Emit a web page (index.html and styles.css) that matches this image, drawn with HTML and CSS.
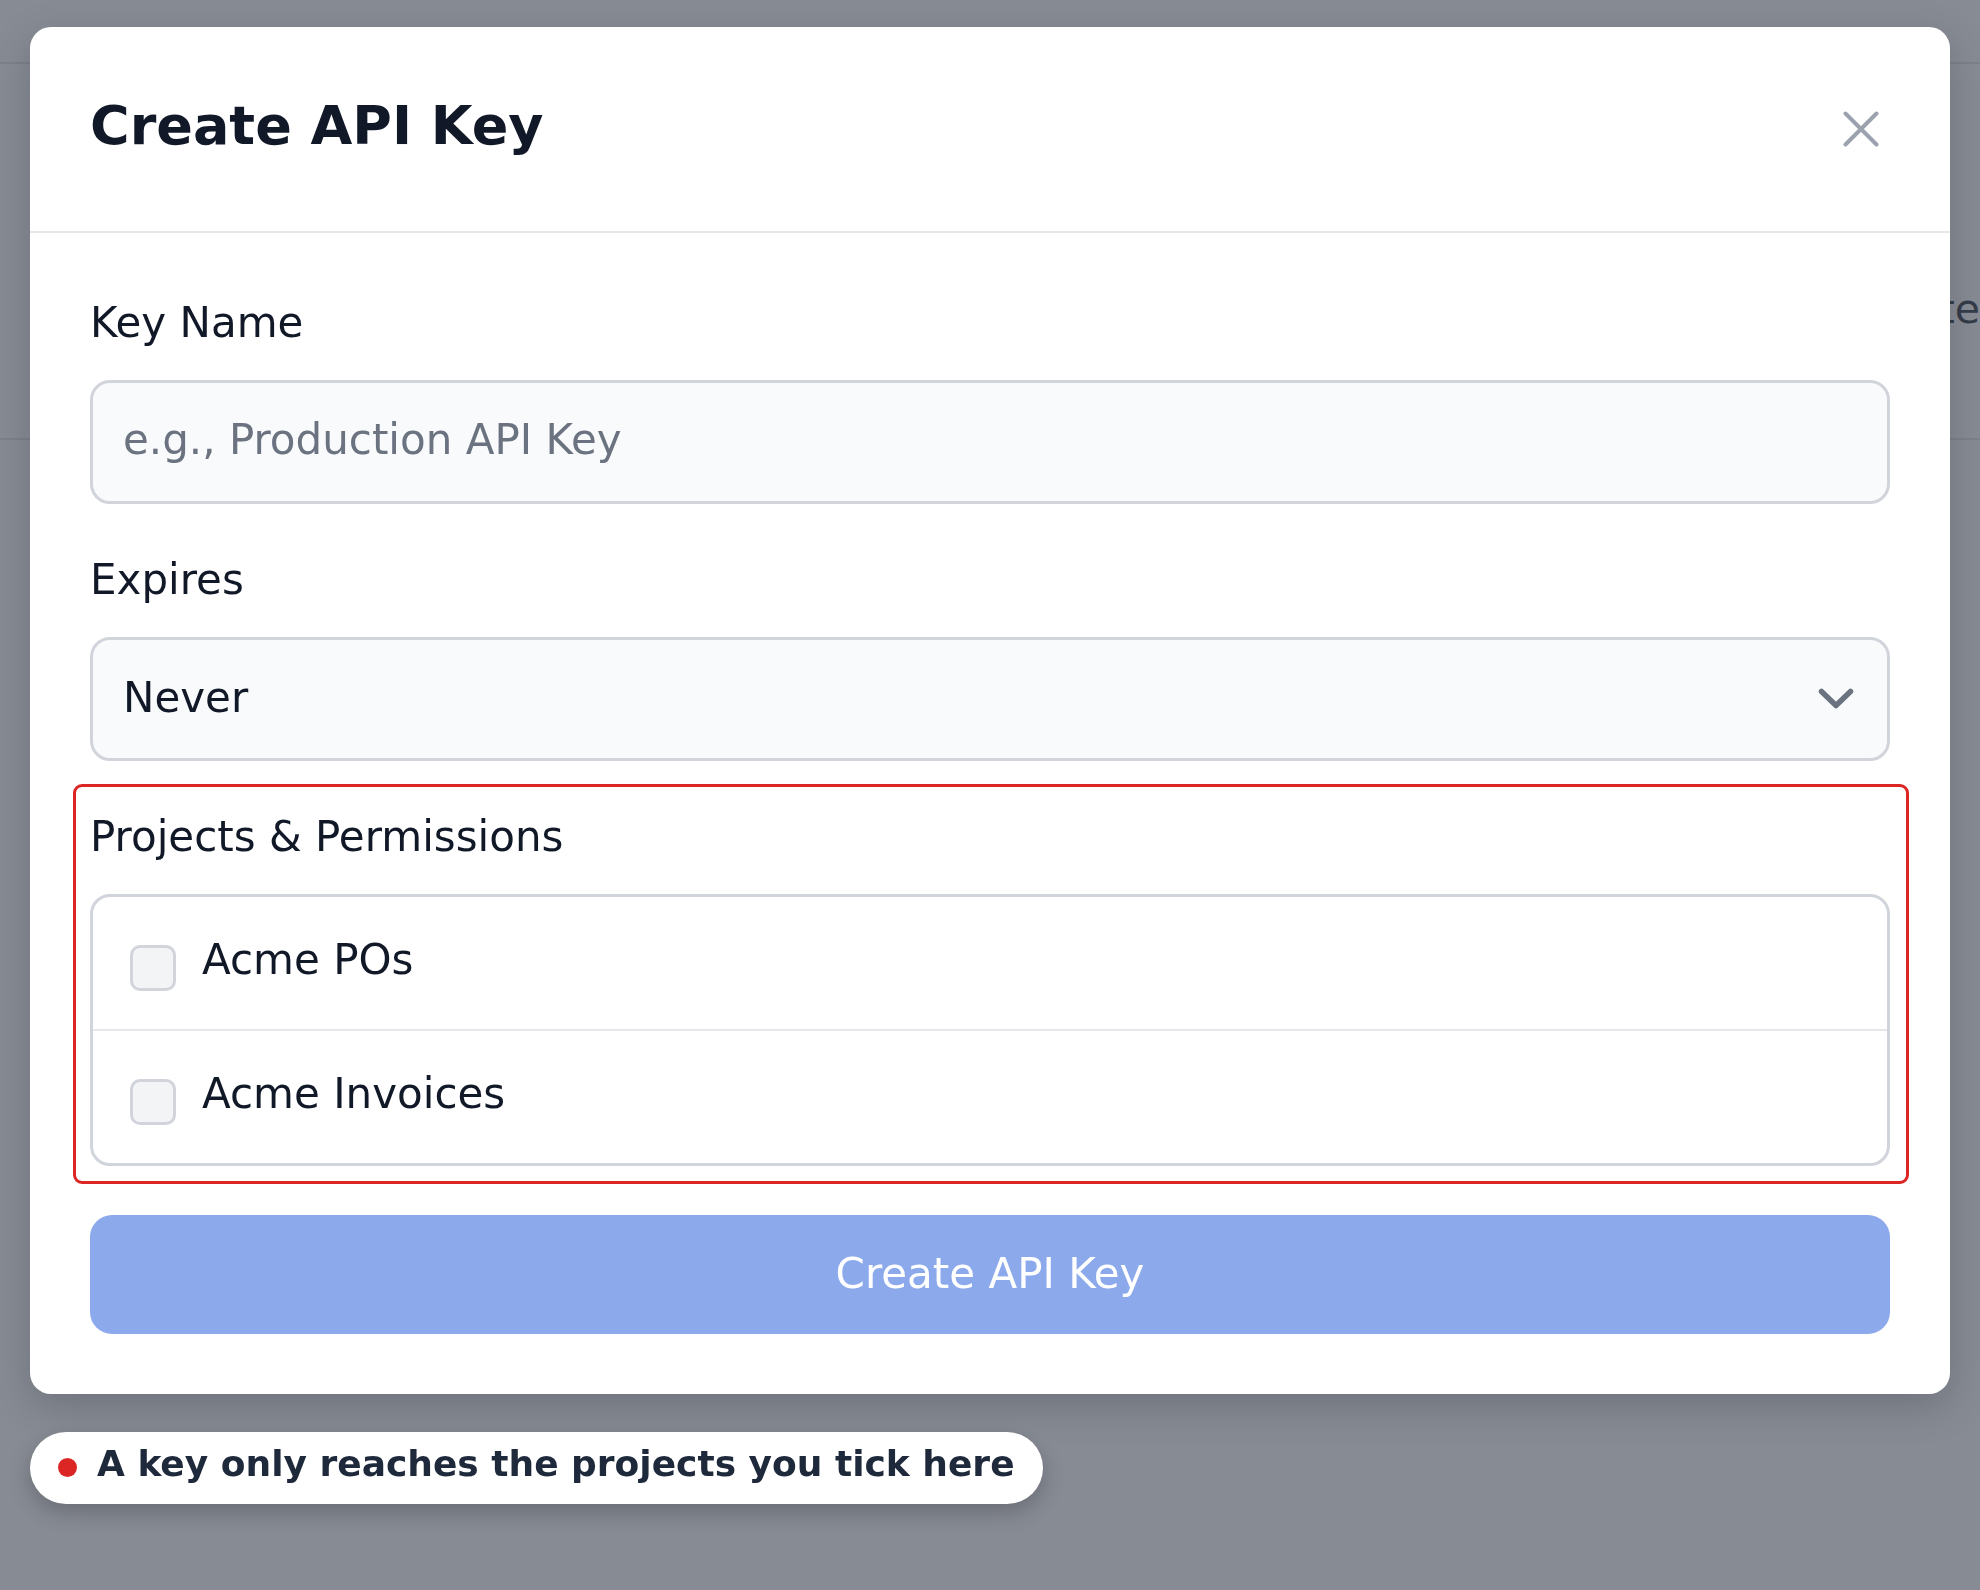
FILE: index.html
```html
<!DOCTYPE html>
<html lang="en">
<head>
<meta charset="utf-8">
<title>Create API Key</title>
<link rel="stylesheet" href="styles.css">
</head>
<body>
  <div class="app">
    <div class="topbar"></div>
    <div class="toolbar"><span class="toolbar-action">Create</span></div>
  </div>

  <div class="overlay">
    <div class="modal">
      <div class="modal-header">
        <h2 class="modal-title">Create API Key</h2>
        <button class="close-btn" aria-label="Close">
          <svg width="36" height="36" viewBox="0 0 36 36"><path d="M2.5 2.5 L33.5 33.5 M33.5 2.5 L2.5 33.5" stroke="#9ca3af" stroke-width="4" stroke-linecap="round" fill="none"/></svg>
        </button>
      </div>
      <div class="modal-body">
        <div class="field">
          <label class="field-label">Key Name</label>
          <input class="text-input" type="text" placeholder="e.g., Production API Key">
        </div>
        <div class="field">
          <label class="field-label">Expires</label>
          <div class="select">
            <span>Never</span>
            <svg width="36" height="22" viewBox="0 0 36 22"><path d="M3.5 3.5 L18 17.5 L32.5 3.5" stroke="#6b7280" stroke-width="5.5" stroke-linecap="round" stroke-linejoin="round" fill="none"/></svg>
          </div>
        </div>
        <div class="field field-annotated">
          <label class="field-label">Projects &amp; Permissions</label>
          <div class="project-list">
            <label class="project-row"><span class="checkbox"></span><span class="project-name">Acme POs</span></label>
            <label class="project-row"><span class="checkbox"></span><span class="project-name">Acme Invoices</span></label>
          </div>
        </div>
        <button class="submit-btn">Create API Key</button>
      </div>
    </div>
    <div class="note-pill">
      <span class="note-dot"></span>
      <span class="note-text">A key only reaches the projects you tick here</span>
    </div>
  </div>
</body>
</html>
```

FILE: styles.css
```css
* { box-sizing: border-box; }

html, body {
  margin: 0;
  padding: 0;
}

body {
  width: 1980px;
  height: 1590px;
  overflow: hidden;
  background: #878b94;
  font-family: "DejaVu Sans", "Liberation Sans", sans-serif;
  color: #111827;
}

/* background app (dimmed) */
.app {
  display: flex;
  flex-direction: column;
}

.topbar {
  height: 64px;
  border-bottom: 2px solid #7d818a;
}

.toolbar {
  height: 376px;
  border-bottom: 2px solid #7d818a;
  display: flex;
  justify-content: flex-end;
  align-items: flex-start;
  padding-top: 214px;
  overflow: hidden;
}

.toolbar-action {
  font-size: 41px;
  line-height: 62px;
  color: #353c4a;
  margin-right: 0;
  white-space: nowrap;
}

/* overlay */
.overlay {
  position: fixed;
  inset: 0;
  padding: 27px 30px 0;
  display: flex;
  flex-direction: column;
  align-items: flex-start;
  gap: 38px;
}

.modal {
  width: 1920px;
  background: #ffffff;
  border-radius: 21px;
  box-shadow: 0 12px 40px rgba(0, 0, 0, 0.18);
}

.modal-header {
  height: 206px;
  padding: 0 60px;
  display: flex;
  align-items: center;
  justify-content: space-between;
  border-bottom: 2px solid #e5e7eb;
}

.modal-title {
  margin: -6px 0 0;
  font-size: 54px;
  font-weight: 700;
  line-height: 66px;
  color: #111827;
}

.close-btn {
  width: 60px;
  height: 60px;
  margin-right: -1px;
  padding: 0;
  border: none;
  background: none;
  display: flex;
  align-items: center;
  justify-content: center;
}

.modal-body {
  padding: 59px 60px 60px;
  display: flex;
  flex-direction: column;
  gap: 45px;
}

.field {
  display: flex;
  flex-direction: column;
}

.field-label {
  font-size: 42px;
  line-height: 62px;
  margin-bottom: 26px;
  color: #111827;
}

.text-input {
  height: 124px;
  width: 100%;
  padding: 0 30px 5px;
  border: 3px solid #d1d5db;
  border-radius: 20px;
  background: #f9fafb;
  font-family: "DejaVu Sans", "Liberation Sans", sans-serif;
  font-size: 42px;
  color: #111827;
  outline: none;
}

.text-input::placeholder {
  color: #6b7280;
}

.select {
  height: 124px;
  padding: 0 33px 3px 30px;
  border: 3px solid #d1d5db;
  border-radius: 20px;
  background: #f9fafb;
  display: flex;
  align-items: center;
  justify-content: space-between;
  font-size: 42px;
  color: #111827;
}

.select svg {
  margin-top: 3px;
}

.field-annotated {
  position: relative;
}

.field-annotated::after {
  content: "";
  position: absolute;
  top: -22px;
  bottom: -18px;
  left: -17px;
  right: -19px;
  border: 3px solid #dc2626;
  border-radius: 9px;
  pointer-events: none;
}

.project-list {
  border: 3px solid #d1d5db;
  border-radius: 20px;
  background: #ffffff;
  display: flex;
  flex-direction: column;
}

.project-row {
  display: flex;
  align-items: flex-start;
  gap: 26px;
  padding: 32px 37px 38px;
}

.project-row + .project-row {
  border-top: 2px solid #e5e7eb;
}

.checkbox {
  width: 46px;
  height: 46px;
  margin-top: 16px;
  flex: none;
  border: 3px solid #d1d5db;
  border-radius: 10px;
  background: #f3f4f6;
}

.project-name {
  font-size: 42px;
  line-height: 62px;
  color: #111827;
}

.submit-btn {
  margin-top: 4px;
  height: 119px;
  width: 100%;
  padding: 0 0 3px;
  border: none;
  border-radius: 22px;
  background: #8ca9ec;
  color: #ffffff;
  font-family: "DejaVu Sans", "Liberation Sans", sans-serif;
  font-size: 42px;
}

/* annotation pill */
.note-pill {
  height: 72px;
  padding: 0 28px 8px 28px;
  display: inline-flex;
  align-items: center;
  gap: 20px;
  background: #ffffff;
  border-radius: 36px;
  box-shadow: 0 8px 22px rgba(0, 0, 0, 0.22);
}

.note-dot {
  width: 19px;
  height: 19px;
  margin-top: 6px;
  border-radius: 50%;
  background: #dc2626;
  flex: none;
}

.note-text {
  font-size: 36px;
  font-weight: 700;
  line-height: 44px;
  color: #1e293b;
  white-space: nowrap;
}
```
